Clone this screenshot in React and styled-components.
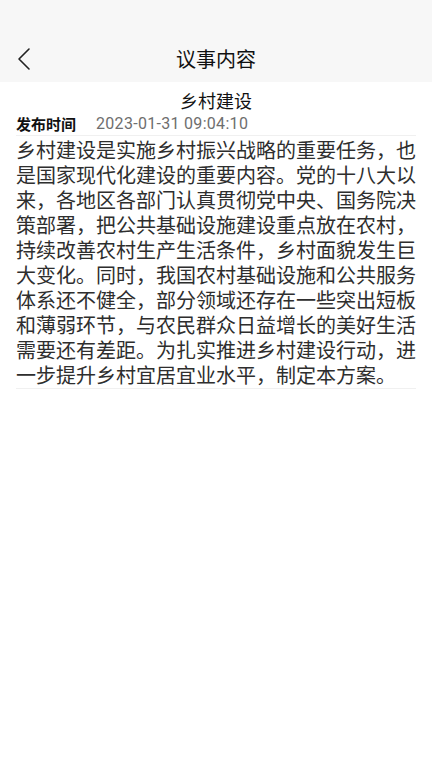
import React from "react";
import styled, { createGlobalStyle } from "styled-components";

const Global = createGlobalStyle`
  html, body { margin: 0; padding: 0; background: #ffffff; }
  body { font-family: "Noto Sans CJK SC", "Noto Sans", sans-serif; color: #222; }
  * { box-sizing: border-box; }
`;

const Page = styled.div`
  width: 432px;
  min-height: 768px;
  background: #fff;
  display: flex;
  flex-direction: column;
`;

const Header = styled.header`
  height: 82px;
  background: #f7f7f7;
  display: grid;
  grid-template-columns: 60px 1fr 60px;
  align-items: end;
  padding-bottom: 6px;
`;

const BackButton = styled.button`
  border: 0;
  background: none;
  padding: 0 0 0 17px;
  height: 34px;
  display: flex;
  align-items: center;
  cursor: pointer;
`;

const HeaderTitle = styled.h1`
  margin: 0;
  text-align: center;
  font-size: 20px;
  font-weight: 400;
  line-height: 34px;
  color: #111;
`;

const Content = styled.main`
  padding: 0 16px;
`;

const ArticleTitle = styled.h2`
  margin: 6px 0 0;
  text-align: center;
  font-size: 18px;
  font-weight: 400;
  line-height: 24px;
  color: #111;
`;

const MetaRow = styled.div`
  display: flex;
  align-items: center;
  gap: 20px;
  height: 22px;
`;

const MetaLabel = styled.span`
  font-size: 15px;
  font-weight: 700;
  color: #111;
`;

const MetaValue = styled.span`
  font-family: "Roboto", "Noto Sans", sans-serif;
  font-size: 16px;
  letter-spacing: 0.3px;
  color: #6e6e6e;
`;

const Body = styled.div`
  margin-top: 1px;
  border-top: 1px solid #f0f0f0;
  border-bottom: 1px solid #f0f0f0;
  font-size: 20px;
  line-height: 25px;
  color: #2e2e2e;
  padding: 1px 0 1px;
  text-align: justify;
`;

export default function App() {
  return (
    <Page>
      <Global />
      <Header>
        <BackButton aria-label="返回">
          <svg width="14" height="24" viewBox="0 0 14 24" fill="none">
            <path d="M12 2 L2 12 L12 22" stroke="#222" strokeWidth="1.6" strokeLinecap="round" strokeLinejoin="round" />
          </svg>
        </BackButton>
        <HeaderTitle>议事内容</HeaderTitle>
        <div />
      </Header>
      <Content>
        <ArticleTitle>乡村建设</ArticleTitle>
        <MetaRow>
          <MetaLabel>发布时间</MetaLabel>
          <MetaValue>2023-01-31 09:04:10</MetaValue>
        </MetaRow>
        <Body>
          乡村建设是实施乡村振兴战略的重要任务，也是国家现代化建设的重要内容。党的十八大以来，各地区各部门认真贯彻党中央、国务院决策部署，把公共基础设施建设重点放在农村，持续改善农村生产生活条件，乡村面貌发生巨大变化。同时，我国农村基础设施和公共服务体系还不健全，部分领域还存在一些突出短板和薄弱环节，与农民群众日益增长的美好生活需要还有差距。为扎实推进乡村建设行动，进一步提升乡村宜居宜业水平，制定本方案。
        </Body>
      </Content>
    </Page>
  );
}
